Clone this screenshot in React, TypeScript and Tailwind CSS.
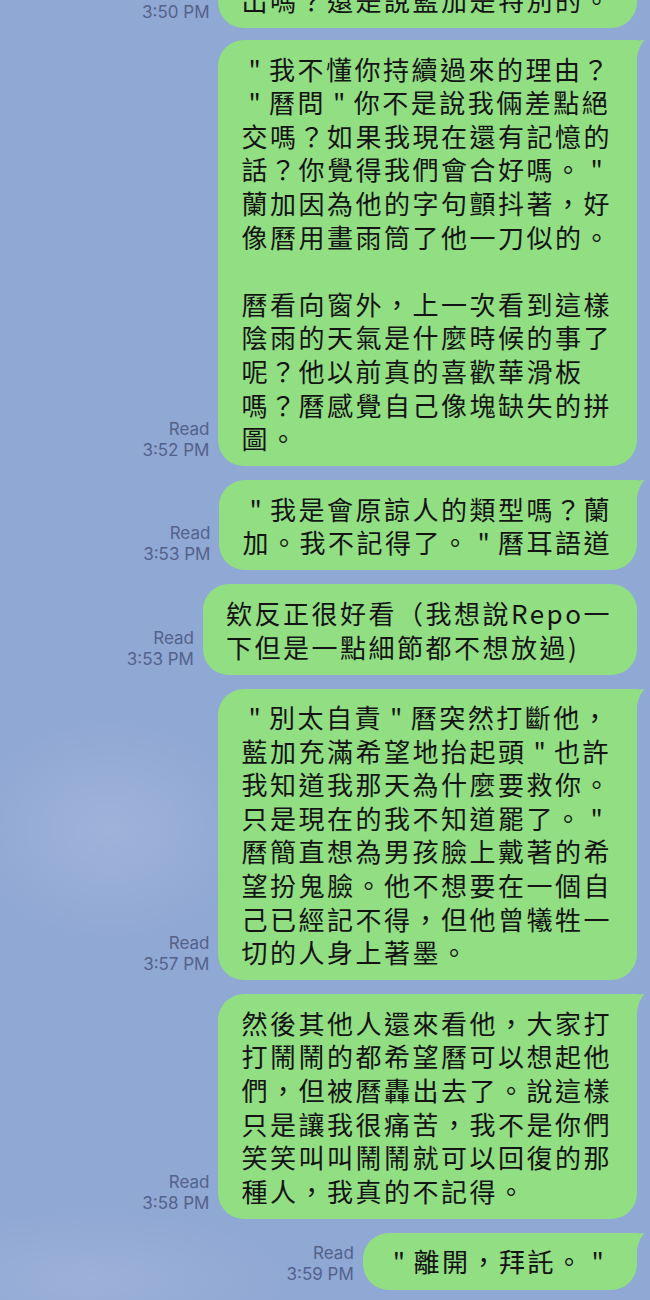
import React from "react";

type Msg = {
  lines: string[];
  time: string;
  read?: boolean;
  tail?: boolean;
};

const messages: Msg[] = [
  { lines: ["出嗎？還是說藍加是特別的。"], time: "3:50 PM", tail: false },
  {
    lines: [
      ' " 我不懂你持續過來的理由？',
      ' " 曆問 " 你不是說我倆差點絕',
      "交嗎？如果我現在還有記憶的",
      '話？你覺得我們會合好嗎。 "',
      "蘭加因為他的字句顫抖著，好",
      "像曆用畫雨筒了他一刀似的。",
      "",
      "曆看向窗外，上一次看到這樣",
      "陰雨的天氣是什麼時候的事了",
      "呢？他以前真的喜歡華滑板",
      "嗎？曆感覺自己像塊缺失的拼",
      "圖。",
    ],
    time: "3:52 PM",
    read: true,
    tail: true,
  },
  {
    lines: [' " 我是會原諒人的類型嗎？蘭', '加。我不記得了。 " 曆耳語道'],
    time: "3:53 PM",
    read: true,
    tail: true,
  },
  {
    lines: ["欸反正很好看（我想說Repo一", "下但是一點細節都不想放過)"],
    time: "3:53 PM",
    read: true,
    tail: false,
  },
  {
    lines: [
      ' " 別太自責 " 曆突然打斷他，',
      '藍加充滿希望地抬起頭 " 也許',
      "我知道我那天為什麼要救你。",
      '只是現在的我不知道罷了。 "',
      "曆簡直想為男孩臉上戴著的希",
      "望扮鬼臉。他不想要在一個自",
      "己已經記不得，但他曾犧牲一",
      "切的人身上著墨。",
    ],
    time: "3:57 PM",
    read: true,
    tail: true,
  },
  {
    lines: [
      "然後其他人還來看他，大家打",
      "打鬧鬧的都希望曆可以想起他",
      "們，但被曆轟出去了。說這樣",
      "只是讓我很痛苦，我不是你們",
      "笑笑叫叫鬧鬧就可以回復的那",
      "種人，我真的不記得。",
    ],
    time: "3:58 PM",
    read: true,
    tail: true,
  },
  { lines: [' " 離開，拜託。 " '], time: "3:59 PM", read: true, tail: true },
];

function Tail() {
  return (
    <svg
      className="absolute top-0 right-[-8px]"
      width="30"
      height="24"
      viewBox="0 0 30 24"
    >
      <path d="M0 0 H20 Q26 1 30 -0.5 Q24 5 22 17 V24 H0 Z" fill="#92de83" />
    </svg>
  );
}

// quotes and spaces sit a little tighter than the CJK glyphs
function Line({ text }: { text: string }) {
  if (text === "") return <div>{"\u00a0"}</div>;
  const parts = text.split(/([ "]+)/);
  return (
    <div>
      {parts.map((p, i) =>
        /^[ "]+$/.test(p) ? (
          <span key={i} className="tracking-[1.2px]">
            {p}
          </span>
        ) : (
          <span key={i}>{p}</span>
        ),
      )}
    </div>
  );
}

function Bubble({ msg }: { msg: Msg }) {
  return (
    <div className="flex justify-end items-end gap-[9px]">
      {/* Read / time */}
      <div className="text-right text-[17px] leading-[21px] text-[#53628a] mb-[5px] font-['Inter','Liberation_Sans',sans-serif]">
        {msg.read && <div>Read</div>}
        <div>{msg.time}</div>
      </div>
      <div
        className={`relative bg-[#92de83] pl-[23px] pr-[25px] py-[11.5px] rounded-[26px] ${msg.tail ? "rounded-tr-none" : ""}`}
      >
        {msg.tail && <Tail />}
        <div className="relative text-[26px] leading-[33.6px] tracking-[2.5px] text-[#141414] whitespace-pre font-['Noto_Sans_CJK_TC',sans-serif]">
          {msg.lines.map((l, i) => (
            <Line key={i} text={l} />
          ))}
        </div>
      </div>
    </div>
  );
}

export default function App() {
  return (
    <div className="w-full h-[1300px] overflow-hidden bg-[#90a8d4] bg-[image:radial-gradient(ellipse_140px_110px_at_110px_830px,rgba(255,255,255,0.13),transparent),radial-gradient(ellipse_200px_70px_at_90px_1280px,rgba(255,255,255,0.1),transparent)]">
      <div className="flex flex-col gap-[14px] pr-[13px] mt-[-28.5px]">
        {messages.map((m, i) => (
          <div key={i} className={i === 1 ? "-mt-[2px]" : ""}>
            <Bubble msg={m} />
          </div>
        ))}
      </div>
    </div>
  );
}
